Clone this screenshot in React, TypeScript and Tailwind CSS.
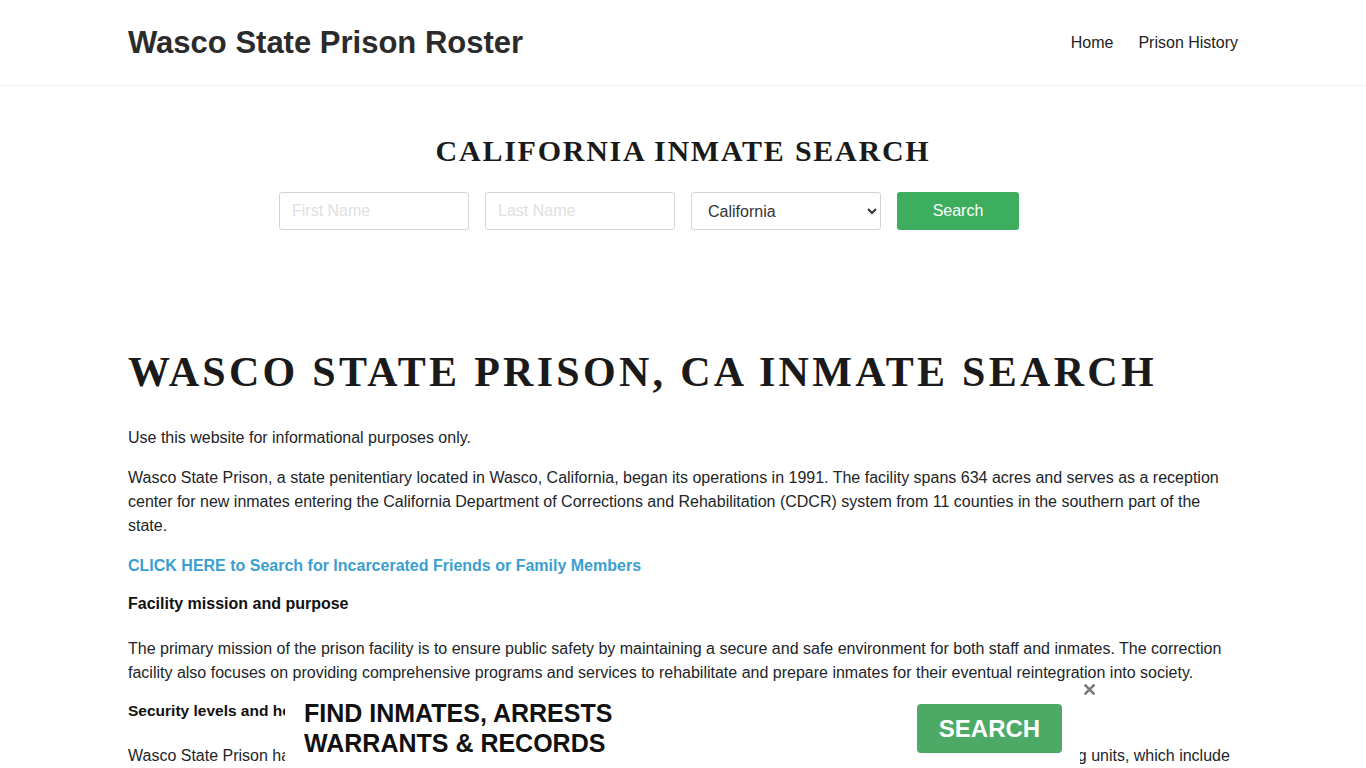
import { useState } from 'react';

const sans = "font-['Liberation_Sans',Arial,sans-serif]";
const serif = "font-['Liberation_Serif','Times_New_Roman',serif]";

export default function App() {
  const [showBanner, setShowBanner] = useState(true);

  return (
    <div className={`${sans} min-h-screen bg-white text-[#212529]`}>
      {/* Header */}
      <header className="border-b border-[#f2f2f2]">
        <div className="mx-auto flex h-[85px] max-w-[1140px] items-center justify-between px-[15px]">
          <a href="#" className="pt-[2px] text-[31px] font-bold text-[#2b2b2b]">
            Wasco State Prison Roster
          </a>
          <nav className="flex items-center gap-[25px] text-[16px] text-[#222]">
            <a href="#">Home</a>
            <a href="#">Prison History</a>
          </nav>
        </div>
      </header>

      {/* Search */}
      <section className="pt-[47px]">
        <h2 className={`${serif} text-center text-[30px] font-bold leading-[36px] tracking-[1.75px] text-[#1a1a1a]`}>
          CALIFORNIA INMATE SEARCH
        </h2>
        <form className="mt-[23px] flex justify-center gap-[16px] pr-[68px]">
          <input
            type="text"
            placeholder="First Name"
            className="h-[38px] w-[190px] rounded-[3px] border border-[#d4d4d4] px-3 text-[16px] placeholder:text-[#e0e0e0]"
          />
          <input
            type="text"
            placeholder="Last Name"
            className="h-[38px] w-[190px] rounded-[3px] border border-[#d4d4d4] px-3 text-[16px] placeholder:text-[#e0e0e0]"
          />
          <select
            defaultValue="California"
            className="h-[38px] w-[190px] rounded-[3px] border border-[#d4d4d4] bg-white px-3 text-[16px] text-[#333]"
          >
            <option>California</option>
            <option>Nevada</option>
            <option>Oregon</option>
          </select>
          <button
            type="button"
            className="h-[38px] w-[122px] rounded-[3px] bg-[#3cae5e] text-[16px] text-white"
          >
            Search
          </button>
        </form>
      </section>

      {/* Content */}
      <main className="mx-auto max-w-[1140px] px-[15px] pt-[117px] pb-40">
        <h1 className={`${serif} text-[42px] font-bold leading-[50px] tracking-[3.3px] text-[#1a1a1a]`}>
          WASCO STATE PRISON, CA INMATE SEARCH
        </h1>

        <div className="mt-[29px] text-[16px] leading-[24px]">
          <p>Use this website for informational purposes only.</p>
          <p className="mt-4">
            Wasco State Prison, a state penitentiary located in Wasco, California, began its operations in 1991. The
            facility spans 634 acres and serves as a reception center for new inmates entering the California
            Department of Corrections and Rehabilitation (CDCR) system from 11 counties in the southern part of the
            state.
          </p>
          <p className="mt-4">
            <a href="#" className="font-bold text-[#3a9fd0]">
              CLICK HERE to Search for Incarcerated Friends or Family Members
            </a>
          </p>
          <h4 className="mt-[14px] font-bold text-[#111]">Facility mission and purpose</h4>
          <p className="mt-[21px]">
            The primary mission of the prison facility is to ensure public safety by maintaining a secure and safe
            environment for both staff and inmates. The correction facility also focuses on providing comprehensive
            programs and services to rehabilitate and prepare inmates for their eventual reintegration into society.
          </p>
          <h4 className="mt-[14px] text-[15.5px] font-bold text-[#111]">Security levels and housing units</h4>
          <p className="mt-[21px]">
            Wasco State Prison has a mix of security levels to accommodate inmates with different classification needs
            and several distinct housing units, which include
            <br />
            Level I, Level III and the reception center. Each unit is designed to accommodate the particular needs and
            risk levels of its inmate population.
          </p>
        </div>
      </main>

      {/* Bottom banner */}
      {showBanner && (
        <div className="fixed bottom-0 left-[285px] h-[73px] w-[795px] bg-white">
          <button
            type="button"
            onClick={() => setShowBanner(false)}
            className="absolute right-[-17px] top-[-14px] text-[18px] font-bold leading-none text-[#777]"
          >
            ✕
          </button>
          <div className="flex h-full items-start justify-between pl-[19px] pr-[18px] pt-[3px]">
            <p className="text-[25px] font-bold leading-[30px] text-[#111]">
              FIND INMATES, ARRESTS
              <br />
              WARRANTS &amp; RECORDS
            </p>
            <button
              type="button"
              className="mt-[6px] h-[49px] w-[145px] rounded-[4px] bg-[#4caa66] text-[24px] font-bold text-white"
            >
              SEARCH
            </button>
          </div>
        </div>
      )}
    </div>
  );
}
